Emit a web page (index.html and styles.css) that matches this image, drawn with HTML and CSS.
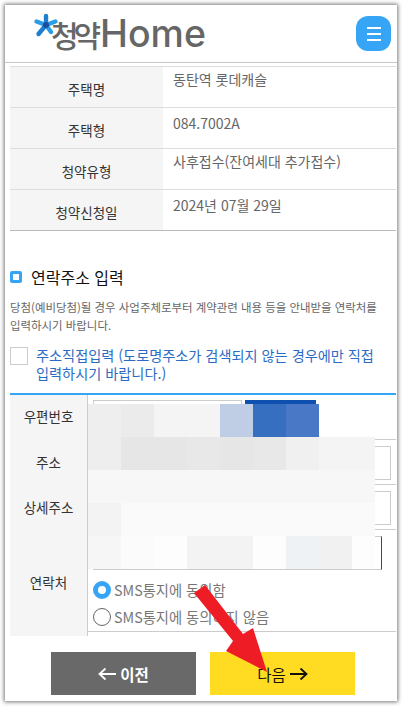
FILE: index.html
```html
<!DOCTYPE html>
<html lang="ko">
<head>
<meta charset="utf-8">
<title>청약Home</title>
<link rel="stylesheet" href="styles.css">
</head>
<body>
<div class="frame">
  <header class="header">
    <div class="logo">
      <span class="logo-ko">청약</span><span class="logo-en">Home</span>
      <svg class="logo-star" width="26" height="26" viewBox="0 0 26 26">
        <g stroke-width="4.4" stroke-linecap="round">
          <line x1="13" y1="12" x2="13" y2="3" stroke="#1d7fd0"/>
          <line x1="13" y1="12" x2="3.5" y2="8.5" stroke="#2a9de6"/>
          <line x1="13" y1="12" x2="22.5" y2="8.5" stroke="#2a9de6"/>
          <line x1="13" y1="12" x2="5.5" y2="21" stroke="#1d7fd0"/>
          <line x1="13" y1="12" x2="18" y2="19" stroke="#2a9de6"/>
        </g>
        <circle cx="13" cy="12" r="3" fill="#1b4d9c"/>
      </svg>
    </div>
    <button class="menu" aria-label="메뉴"><i></i><i></i><i></i></button>
  </header>

  <div class="content">
    <div class="info">
      <div class="info-row"><div class="info-label">주택명</div><div class="info-value">동탄역 롯데캐슬</div></div>
      <div class="info-row"><div class="info-label">주택형</div><div class="info-value">084.7002A</div></div>
      <div class="info-row"><div class="info-label">청약유형</div><div class="info-value">사후접수(잔여세대 추가접수)</div></div>
      <div class="info-row"><div class="info-label">청약신청일</div><div class="info-value">2024년 07월 29일</div></div>
    </div>

    <h2 class="title"><span class="title-mark"></span>연락주소 입력</h2>
    <p class="desc">당첨(예비당첨)될 경우 사업주체로부터 계약관련 내용 등을 안내받을 연락처를<br>입력하시기 바랍니다.</p>

    <div class="direct">
      <span class="check"></span>
      <span class="direct-text">주소직접입력 (도로명주소가 검색되지 않는 경우에만 직접<br>입력하시기 바랍니다.)</span>
    </div>

    <div class="form">
      <div class="form-row r-zip">
        <div class="form-label">우편번호</div>
        <div class="form-cell zip"><span class="input zip-input"></span><span class="zip-btn"></span></div>
      </div>
      <div class="form-row r-addr">
        <div class="form-label">주소</div>
        <div class="form-cell"><span class="input full"></span></div>
      </div>
      <div class="form-row r-addr">
        <div class="form-label">상세주소</div>
        <div class="form-cell"><span class="input full"></span></div>
      </div>
      <div class="form-row r-tel">
        <div class="form-label">연락처</div>
        <div class="form-cell tel">
          <span class="input tel-input"></span>
          <label class="radio"><span class="dot on"></span>SMS통지에 동의함</label>
          <label class="radio"><span class="dot"></span>SMS통지에 동의하지 않음</label>
        </div>
      </div>
      <div class="mosaic" aria-hidden="true">
        <b class="c1"></b><b class="c2"></b><b class="c3"></b><b class="c3"></b><b class="c4"></b><b class="c5"></b><b class="c6"></b><b class="c0"></b><b class="c0"></b>
        <b class="c1"></b><b class="c7"></b><b class="c7"></b><b class="c8"></b><b class="c7"></b><b class="c8"></b><b class="c9"></b><b class="c3"></b><b class="c3"></b>
        <b class="c10"></b><b class="c10"></b><b class="c10"></b><b class="c10"></b><b class="c10"></b><b class="c10"></b><b class="c10"></b><b class="c10"></b><b class="c10"></b>
        <b class="c11"></b><b class="c12"></b><b class="c12"></b><b class="c12"></b><b class="c12"></b><b class="c12"></b><b class="c12"></b><b class="c12"></b><b class="c12"></b>
        <b class="c13"></b><b class="c14"></b><b class="c15"></b><b class="c11"></b><b class="c11"></b><b class="c15"></b><b class="c16"></b><b class="c17"></b><b class="c15"></b>
      </div>
    </div>

    <div class="actions">
      <button class="btn prev">
        <svg width="18" height="14" viewBox="0 0 18 14"><path d="M18 7H1.500M7.500 1.500L1.500 7l6 5.500" fill="none" stroke="#fff" stroke-width="1.800"/></svg>
        이전
      </button>
      <button class="btn next">
        다음
        <svg width="18" height="14" viewBox="0 0 18 14"><path d="M0 7h16.500M10.500 1.500L16.500 7l-6 5.500" fill="none" stroke="#111" stroke-width="1.800"/></svg>
      </button>
    </div>
  </div>

  <svg class="red-arrow" width="90" height="100" viewBox="0 0 90 100" aria-hidden="true">
    <polygon points="2,14 13,6 51,55 61,49 75,93 34,72 41,62" fill="#ee1c25"/>
  </svg>
</div>
</body>
</html>
```

FILE: styles.css
```css
* { box-sizing: border-box; }
html, body { margin: 0; height: 707px; overflow: hidden; background: #fff; }
body {
  padding: 5px 6px 6px 5px;
  font-family: "Noto Sans CJK KR", "Noto Sans", sans-serif;
  color: #333;
}
.frame {
  position: relative;
  height: 696px;
  background: #fff;
  box-shadow: 0 0 4px 1px #777;
  overflow: hidden;
}
.header {
  height: 58px;
  border-bottom: 1px solid #c8c8c8;
  display: flex;
  align-items: flex-start;
  justify-content: space-between;
  padding: 11px 6px 0 30px;
}
.logo { position: relative; display: flex; align-items: center; height: 36px; padding-left: 15px; }
.logo-star { position: absolute; left: -2px; top: -3px; }
.logo-ko { font-size: 30px; font-weight: 500; color: #666; letter-spacing: -5px; line-height: 36px; margin-left: 1px; width: 49px; white-space: nowrap; }
.logo-en { font-family: "Inter", sans-serif; font-size: 37.500px; font-weight: 500; color: #666; line-height: 36px; padding-bottom: 1px; }
.menu {
  width: 35px; height: 35px; padding: 0; border: 0; border-radius: 12px;
  background: #36a5f5;
  display: flex; flex-direction: column; align-items: center; justify-content: center; gap: 4px;
}
.menu i { display: block; width: 14px; height: 2px; background: #fff; }
.content { padding: 3px 1px 0 5px; }
.info { border-top: 1px solid #ddd; border-bottom: 1px solid #bbb; }
.info-row {
  display: grid;
  grid-template-columns: 153px 1fr;
  height: 41px;
  border-bottom: 1px solid #ddd;
}
.info-row:last-child { border-bottom: 0; height: 40px; }
.info-label {
  background: #f5f5f5;
  text-align: center;
  font-size: 13.500px;
  padding-top: 12px;
  line-height: 20px;
}
.info-value { padding: 2px 0 0 10px; font-size: 14px; line-height: 20px; color: #666; }
.info-row:nth-child(even) .info-value { padding-top: 5px; }
.title {
  margin: 34px 0 0;
  display: flex; align-items: center; gap: 9px;
  font-size: 16px; font-weight: 400; color: #111; line-height: 24px;
}
.title-mark { width: 12px; height: 12px; border: 3px solid #36a5f5; border-radius: 2px; background: #fff; }
.desc { margin: 9px 0 0; font-size: 11.450px; line-height: 18px; color: #666; white-space: nowrap; }
.direct { display: flex; gap: 8px; margin-top: 12px; }
.check { flex: none; width: 18px; height: 18px; border: 1px solid #ccc; margin-top: 1px; }
.direct-text { font-size: 14.200px; line-height: 18px; color: #2a6cc4; }
.form { position: relative; border-top: 2px solid #36a5f5; margin-top: 11px; }
.form-row { display: grid; grid-template-columns: 78px 1fr; border-bottom: 1px solid #ccc; }
.r-zip { height: 45px; }
.r-addr { height: 45px; }
.r-tel { height: 102px; }
.form-label {
  background: #f5f5f5;
  border-right: 1px solid #ccc;
  text-align: center;
  font-size: 13.500px;
  line-height: 20px;
  padding-bottom: 3px;
  display: flex; align-items: center; justify-content: center;
}
.form-cell { padding: 6px 5px; }
.input { display: block; height: 34px; border: 1px solid #ccc; background: #fff; }
.zip { display: flex; gap: 3px; padding-top: 5px; }
.zip-input { width: 149px; }
.zip-btn { width: 71px; height: 34px; background: #0f4fb0; }
.full { width: 100%; }
.tel-input { width: 289px; border-right: 1px solid #0f4fb0; }
.radio { display: flex; align-items: center; gap: 3px; height: 27px; font-size: 14.300px; color: #777; }
.tel-input + .radio { margin-top: 6px; }
.dot { width: 18px; height: 18px; border-radius: 50%; border: 1px solid #666; background: #fff; }
.dot.on { border: 5px solid #36a5f5; }
.mosaic {
  position: absolute;
  left: 78px;
  top: 9px;
  display: grid;
  grid-template-columns: repeat(8, 33px) 23px;
  grid-auto-rows: 33px;
}
.mosaic b { display: block; }
.c0 { background: transparent; }
.c1 { background: #eee; }
.c2 { background: #ebebeb; }
.c3 { background: #f4f4f4; }
.c4 { background: #bfcee4; }
.c5 { background: #366fc0; }
.c6 { background: #4878c6; }
.c7 { background: #e6e6e6; }
.c8 { background: #e8e8e8; }
.c9 { background: #f0f0f0; }
.c10 { background: #f7f7f7; }
.c11 { background: #f3f3f3; }
.c12 { background: #fafafa; }
.c13 { background: #f6f6f6; }
.c14 { background: #fbfbfb; }
.c15 { background: #fdfdfd; }
.c16 { background: #eff2f5; }
.c17 { background: #f1f1f1; }
.actions { display: flex; gap: 14px; margin: 20px 0 0 41px; }
.btn {
  width: 145px; height: 43px; padding: 0; border: 0;
  display: flex; align-items: center; justify-content: center; gap: 4px;
  font-family: inherit; font-size: 15.500px;
}
.prev { background: #696969; color: #fff; font-weight: 700; }
.next { background: #ffdc22; color: #111; font-weight: 400; }
.red-arrow { position: absolute; left: 187px; top: 574px; }
```
